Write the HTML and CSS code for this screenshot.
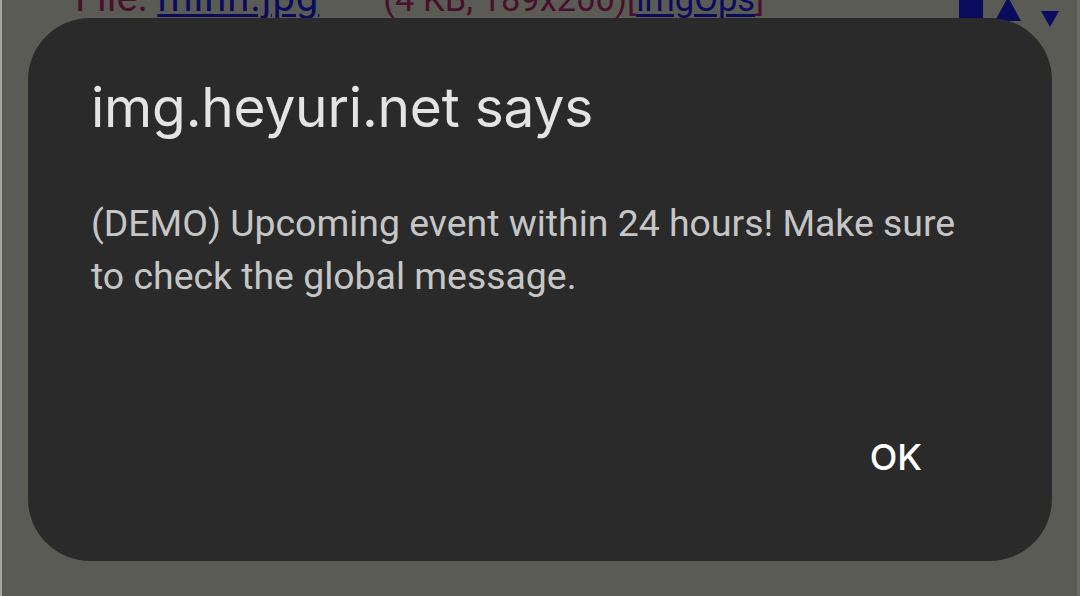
FILE: index.html
```html
<!DOCTYPE html>
<html>
<head>
<meta charset="utf-8">
<link rel="stylesheet" href="styles.css">
</head>
<body>
<div class="page">
  <div class="post-row">
    <span class="label">File: </span><a class="link filename" href="#">mihh.jpg</a>
    <span class="meta">(4 KB, 189x200)[<a class="link" href="#">imgOps</a>]</span>
    <span class="tools">
      <span class="sq"></span>
      <span class="tri-up"></span>
      <span class="tri-down"></span>
    </span>
  </div>
</div>
<div class="overlay">
  <div class="dialog">
    <h1 class="title">img.heyuri.net says</h1>
    <p class="message">(DEMO) Upcoming event within 24 hours! Make sure to check the global message.</p>
    <div class="actions">
      <span class="ok">OK</span>
    </div>
  </div>
</div>
</body>
</html>
```

FILE: styles.css
```css
html, body {
  margin: 0;
  padding: 0;
  width: 1080px;
  height: 596px;
  overflow: hidden;
  background: #5a5b54;
}

.page {
  height: 596px;
  overflow: hidden;
  border-left: 2px solid #a6a6a0;
  border-right: 3px solid #6a6b64;
  box-sizing: border-box;
}

.post-row {
  display: flex;
  align-items: baseline;
  margin-top: -26px;
  padding-left: 73px;
  font-family: Roboto, "Liberation Sans", sans-serif;
  font-size: 40px;
  line-height: 47px;
  color: #4a0f2d;
  white-space: nowrap;
}

.label {
  white-space: pre;
}

.link {
  color: #0b0b5e;
  text-decoration: underline;
  text-decoration-thickness: 3px;
  text-underline-offset: 3px;
}

.filename {
  letter-spacing: 1px;
}

.meta {
  margin-left: 64px;
  font-size: 34.5px;
}

.tools {
  display: flex;
  align-items: flex-end;
  gap: 12px;
  margin-left: auto;
  margin-right: 18px;
  align-self: flex-end;
  padding-bottom: 2px;
}

.sq {
  width: 24px;
  height: 24px;
  background: #0b0b5e;
}

.tri-up {
  width: 0;
  height: 0;
  border-left: 13px solid transparent;
  border-right: 13px solid transparent;
  border-bottom: 24px solid #0b0b5e;
}

.tri-down {
  width: 0;
  height: 0;
  border-left: 9px solid transparent;
  border-right: 9px solid transparent;
  border-top: 16px solid #0b0b5e;
  margin-left: 8px;
  margin-bottom: -6px;
}

.overlay {
  position: fixed;
  inset: 0;
  padding: 18px 28px 35px 28px;
  box-sizing: border-box;
  display: flex;
}

.dialog {
  flex: 1;
  background: #2a2a2a;
  border-radius: 62px;
  padding: 59px 71px 84px 63px;
  display: flex;
  flex-direction: column;
  font-family: Roboto, "Liberation Sans", sans-serif;
}

.title {
  margin: 0;
  font-family: Inter, Roboto, sans-serif;
  font-size: 55px;
  line-height: 60px;
  font-weight: 400;
  letter-spacing: -0.2px;
  color: #e4e4e4;
}

.message {
  margin: 60px 0 0 0;
  font-size: 37.4px;
  line-height: 53px;
  color: #c6c6c6;
}

.actions {
  margin-top: auto;
  display: flex;
  justify-content: flex-end;
  padding-right: 59px;
}

.ok {
  font-family: Inter, Roboto, sans-serif;
  font-size: 36px;
  line-height: 40px;
  font-weight: 500;
  color: #ffffff;
}
```
